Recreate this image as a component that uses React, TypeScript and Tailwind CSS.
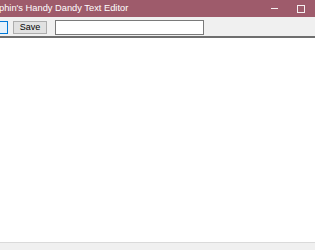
export default function App() {
  return (
    <div className="flex h-[250px] w-[315px] flex-col overflow-hidden bg-white font-['Liberation_Sans',sans-serif]">
      {/* title bar */}
      <div className="flex h-[17px] shrink-0 items-center bg-[#9e5b6b] text-white">
        <span className="ml-[-1px] whitespace-nowrap text-[9.3px] leading-none">phin's Handy Dandy Text Editor</span>
        <div className="ml-auto flex items-center">
          <div className="mr-[19px] h-px w-[7px] bg-white/90" />
          <div className="mr-[10px] h-[8px] w-[8px] border border-white/90" />
        </div>
      </div>

      {/* toolbar */}
      <div className="flex h-[21px] shrink-0 items-center gap-[5px] border-b-2 border-[#6e6e6e] bg-[#f0f0f0] pt-px">
        <div className="ml-[-12px] h-[13px] w-[20px] border border-[#0078d7] bg-[#e5f1fb]" />
        <button className="h-[13px] w-[34px] border border-[#adadad] bg-[#e1e1e1] text-[9px] leading-none text-black">
          Save
        </button>
        <input className="ml-[3px] h-[15px] w-[149px] border border-[#7a7a7a] bg-white outline-none" />
      </div>

      {/* body */}
      <div className="flex-1 bg-white" />

      {/* status */}
      <div className="h-[8px] shrink-0 border-t border-[#dadada] bg-[#f0f0f0]" />
    </div>
  );
}
